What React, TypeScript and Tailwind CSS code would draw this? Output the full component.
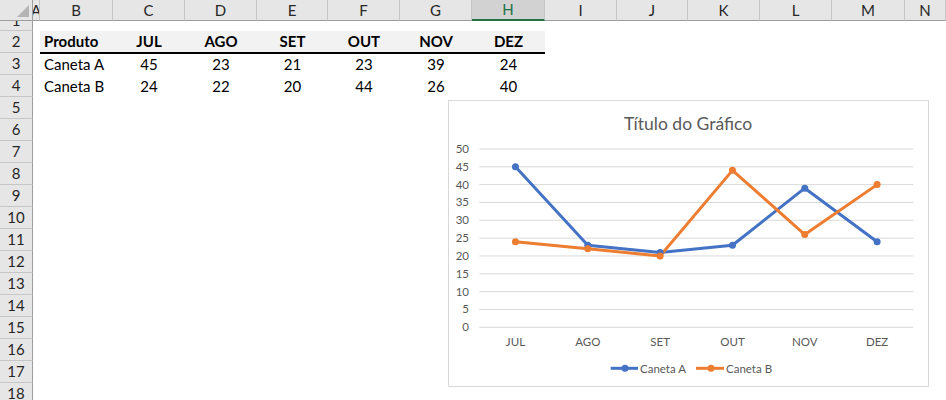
import React from 'react';

type Col = { k: string; w: string };

const cols: Col[] = [
  { k: 'A', w: 'w-[7px]' },
  { k: 'B', w: 'w-[73px]' },
  { k: 'C', w: 'w-[72px]' },
  { k: 'D', w: 'w-[72px]' },
  { k: 'E', w: 'w-[71px]' },
  { k: 'F', w: 'w-[72px]' },
  { k: 'G', w: 'w-[72px]' },
  { k: 'H', w: 'w-[73px]' },
  { k: 'I', w: 'w-[72px]' },
  { k: 'J', w: 'w-[71px]' },
  { k: 'K', w: 'w-[72px]' },
  { k: 'L', w: 'w-[72px]' },
  { k: 'M', w: 'w-[73px]' },
  { k: 'N', w: 'w-[41px]' },
];

const months = ['JUL', 'AGO', 'SET', 'OUT', 'NOV', 'DEZ'];
const dataA = [45, 23, 21, 23, 39, 24];
const dataB = [24, 22, 20, 44, 26, 40];

const cells: Record<number, Record<string, string>> = {
  2: { B: 'Produto', C: 'JUL', D: 'AGO', E: 'SET', F: 'OUT', G: 'NOV', H: 'DEZ' },
  3: { B: 'Caneta A', C: '45', D: '23', E: '21', F: '23', G: '39', H: '24' },
  4: { B: 'Caneta B', C: '24', D: '22', E: '20', F: '44', G: '26', H: '40' },
};

const FONT = "Lato, 'Liberation Sans', sans-serif";

function Chart() {
  const x0 = 31.3;
  const step = 72.33;
  const cx = (i: number) => x0 + step / 2 + i * step;
  const cy = (v: number) => 227.3 - v * 3.567;
  const grid = [0, 5, 10, 15, 20, 25, 30, 35, 40, 45, 50];
  const pts = (d: number[]) => d.map((v, i) => `${cx(i)},${cy(v)}`).join(' ');
  return (
    <div className="absolute left-[448px] top-[100px] w-[481px] h-[287px] bg-white">
      <svg width={481} height={287} viewBox="0 0 481 287" style={{ fontFamily: FONT }}>
        <rect x={0.5} y={0.5} width={480} height={286} fill="#fff" stroke="#d9d9d9" />
        <text x={240} y={30} textAnchor="middle" fontSize={17.5} fill="#595959">
          Título do Gráfico
        </text>
        {grid.map((g) => (
          <g key={g}>
            <line x1={x0} x2={465.3} y1={cy(g)} y2={cy(g)} stroke="#d9d9d9" strokeWidth={1} />
            <text x={21} y={cy(g) + 4} textAnchor="end" fontSize={11.5} fill="#595959">
              {g}
            </text>
          </g>
        ))}
        {months.map((m, i) => (
          <text key={m} x={cx(i)} y={246} textAnchor="middle" fontSize={11.5} fill="#595959">
            {m}
          </text>
        ))}
        <polyline points={pts(dataA)} fill="none" stroke="#4472c4" strokeWidth={3} strokeLinejoin="round" strokeLinecap="round" />
        <polyline points={pts(dataB)} fill="none" stroke="#ed7d31" strokeWidth={3} strokeLinejoin="round" strokeLinecap="round" />
        {dataA.map((v, i) => (
          <circle key={'a' + i} cx={cx(i)} cy={cy(v)} r={3.5} fill="#4472c4" />
        ))}
        {dataB.map((v, i) => (
          <circle key={'b' + i} cx={cx(i)} cy={cy(v)} r={3.5} fill="#ed7d31" />
        ))}
        <line x1={162.7} x2={190} y1={268.3} y2={268.3} stroke="#4472c4" strokeWidth={3} />
        <circle cx={177} cy={268.3} r={3.5} fill="#4472c4" />
        <text x={192} y={272.5} fontSize={11.5} fill="#595959">Caneta A</text>
        <line x1={248} x2={276} y1={268.3} y2={268.3} stroke="#ed7d31" strokeWidth={3} />
        <circle cx={263} cy={268.3} r={3.5} fill="#ed7d31" />
        <text x={278} y={272.5} fontSize={11.5} fill="#595959">Caneta B</text>
      </svg>
    </div>
  );
}

export default function App() {
  const rows = Array.from({ length: 18 }, (_, i) => i + 1);
  return (
    <div
      className="relative w-[946px] h-[400px] overflow-hidden bg-white text-[15px] text-black"
      style={{ fontFamily: FONT }}
    >
      {/* column headers */}
      <div className="flex h-[21px]">
        <div className="relative w-[33px] h-[21px] bg-[#e6e6e6] border-r border-b border-[#9e9e9e]">
          <svg className="absolute right-[3px] bottom-[3px]" width="12" height="12" viewBox="0 0 12 12">
            <polygon points="12,0 12,12 0,12" fill="#b4b4b4" />
          </svg>
        </div>
        {cols.map((c) => {
          const sel = c.k === 'H';
          return (
            <div
              key={c.k}
              className={
                sel
                  ? `${c.w} shrink-0 h-[21px] overflow-hidden flex items-center justify-center bg-[#d2d2d2] text-[#217346] border-r border-[#c6c6c6] border-b-2 border-b-[#217346] leading-none`
                  : `${c.w} shrink-0 h-[21px] overflow-hidden flex items-center justify-center bg-[#e6e6e6] text-[#262626] border-r border-[#c6c6c6] border-b border-b-[#9e9e9e] leading-none`
              }
            >
              {c.k}
            </div>
          );
        })}
      </div>
      {rows.map((r) => {
        const h = r === 1 ? 'h-[10px]' : 'h-[22px]';
        const rowCells = cells[r] || {};
        return (
          <div key={r} className={`flex ${h}`}>
            <div
              className={`w-[33px] shrink-0 ${h} overflow-hidden bg-[#e6e6e6] border-r border-r-[#9e9e9e] border-b border-b-[#c6c6c6] text-[#262626]`}
            >
              {r === 1 ? (
                <div className="h-[22px] mt-[-12px] flex items-center justify-center leading-none">1</div>
              ) : (
                <div className="h-full flex items-center justify-center leading-none">{r}</div>
              )}
            </div>
            {cols.map((c) => {
              const txt = rowCells[c.k];
              const inTable = r === 2 && c.k >= 'B' && c.k <= 'H';
              const isB = c.k === 'B';
              return (
                <div
                  key={c.k}
                  className={
                    inTable
                      ? `${c.w} shrink-0 ${h} flex items-center bg-[#f2f2f2] border-b border-black shadow-[0_1px_0_#000] font-bold ${isB ? 'justify-start pl-[4px]' : 'justify-center'}`
                      : `${c.w} shrink-0 ${h} flex items-center ${isB ? 'justify-start pl-[4px]' : 'justify-center'}`
                  }
                >
                  {txt}
                </div>
              );
            })}
          </div>
        );
      })}
      <Chart />
    </div>
  );
}
